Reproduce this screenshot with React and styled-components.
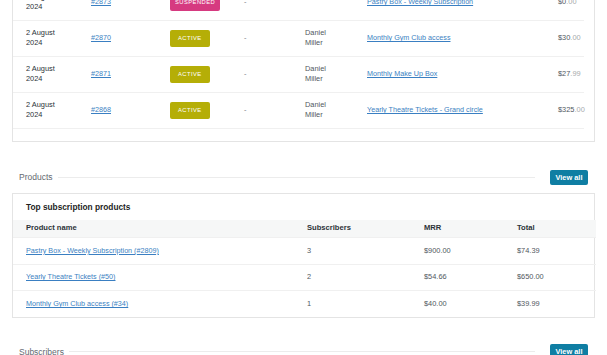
import React from "react";
import styled, { createGlobalStyle } from "styled-components";

const Global = createGlobalStyle`
  html, body {
    margin: 0;
    padding: 0;
    background: #fff;
    font-family: "Liberation Sans", Arial, sans-serif;
    color: #1e1e1e;
    overflow: hidden;
  }
`;

const Page = styled.div`
  width: 607px;
  margin-top: -16px;
  padding: 0 12px;
  box-sizing: border-box;
`;

const Card = styled.div`
  border: 1px solid #e4e4e4;
  background: #fff;
  padding-bottom: ${(p) => p.$pb || 0}px;
`;

const Table = styled.table`
  border-collapse: collapse;
  table-layout: fixed;
  width: ${(p) => p.$w || "100%"};
  font-size: 7.4px;
`;

const Row = styled.tr`
  height: ${(p) => p.$h}px;
  border-bottom: 1px solid #f0f0f0;
  background: ${(p) => (p.$head ? "#f6f7f7" : "transparent")};
  &:last-child {
    border-bottom: ${(p) => (p.$noLast ? "none" : "1px solid #f0f0f0")};
  }
`;

const Cell = styled.td`
  padding: 0 13px;
  vertical-align: middle;
  line-height: 10px;
  color: ${(p) => p.$color || "#2c3338"};
  font-weight: ${(p) => (p.$bold ? 700 : 400)};
  font-size: ${(p) => (p.$bold ? "7.6px" : "inherit")};
  white-space: ${(p) => (p.$nowrap ? "nowrap" : "normal")};
  text-align: left;
`;

const Link = styled.a`
  color: #3a7fc2;
  font-size: 7.2px;
  text-decoration: underline;
  white-space: nowrap;
`;

const Badge = styled.span`
  display: inline-block;
  padding: 0 ${(p) => (p.$wide ? 5 : 8)}px;
  height: 17px;
  line-height: 17px;
  border-radius: 2px;
  background: ${(p) => p.$bg};
  color: #fff;
  font-size: 5.8px;
  letter-spacing: 0.45px;
  text-transform: uppercase;
`;

const Dec = styled.span`
  color: #a7aaad;
`;

const Section = styled.div`
  display: flex;
  align-items: center;
  margin: ${(p) => p.$mt}px 0 8px;
  padding: 0 0 0 7px;
`;

const Label = styled.span`
  font-size: 8.5px;
  color: #646970;
`;

const Line = styled.div`
  flex: 1;
  height: 1px;
  background: #ececec;
  margin: 0 15px 0 5px;
`;

const Button = styled.button`
  width: 38px;
  height: 15px;
  margin-right: 7px;
  padding: 0;
  border: none;
  border-radius: 2px;
  background: #0f7ea3;
  color: #fff;
  font-family: inherit;
  font-weight: 700;
  font-size: 7.4px;
`;

const Title = styled.div`
  height: 26px;
  display: flex;
  align-items: center;
  padding-left: 13px;
  font-weight: 700;
  font-size: 8.3px;
  color: #1e1e1e;
`;

const Money = ({ v }) => {
  const [a, b] = v.split(".");
  return (
    <>
      {a}
      <Dec>.{b}</Dec>
    </>
  );
};

const orders = [
  { date: "2 August 2024", id: "#2873", status: "suspended", cust: "", prod: "Pastry Box - Weekly Subscription", total: "$0.00" },
  { date: "2 August 2024", id: "#2870", status: "active", cust: "Daniel Miller", prod: "Monthly Gym Club access", total: "$30.00" },
  { date: "2 August 2024", id: "#2871", status: "active", cust: "Daniel Miller", prod: "Monthly Make Up Box", total: "$27.99" },
  { date: "2 August 2024", id: "#2868", status: "active", cust: "Daniel Miller", prod: "Yearly Theatre Tickets - Grand circle", total: "$325.00" },
];

const products = [
  { name: "Pastry Box - Weekly Subscription (#2809)", subs: "3", mrr: "$900.00", total: "$74.39" },
  { name: "Yearly Theatre Tickets (#50)", subs: "2", mrr: "$54.66", total: "$650.00" },
  { name: "Monthly Gym Club access (#34)", subs: "1", mrr: "$40.00", total: "$39.99" },
];

const orderCols = [65, 79, 74, 61, 62, 191, 39];
const productCols = [281, 117, 93, 92];

export default function App() {
  return (
    <>
      <Global />
      <Page>
        <Card $pb={12}>
          <Table $w="571px">
            <colgroup>
              {orderCols.map((w, i) => (
                <col key={i} style={{ width: w }} />
              ))}
            </colgroup>
            <tbody>
              {orders.map((o, i) => (
                <Row key={o.id} $h={i === 0 ? 35 : 36}>
                  <Cell>{o.date}</Cell>
                  <Cell><Link href="#">{o.id}</Link></Cell>
                  <Cell $nowrap>
                    {o.status === "active" ? (
                      <Badge $bg="#b5ae07">Active</Badge>
                    ) : (
                      <Badge $bg="#d63a80" $wide>Suspended</Badge>
                    )}
                  </Cell>
                  <Cell $color="#787c82">-</Cell>
                  <Cell $color="#50575e">{o.cust}</Cell>
                  <Cell><Link href="#">{o.prod}</Link></Cell>
                  <Cell $color="#50575e" $nowrap><Money v={o.total} /></Cell>
                </Row>
              ))}
            </tbody>
          </Table>
        </Card>

        <Section $mt={28}>
          <Label>Products</Label>
          <Line />
          <Button>View all</Button>
        </Section>

        <Card>
          <Title>Top subscription products</Title>
          <Table>
            <colgroup>
              {productCols.map((w, i) => (
                <col key={i} style={{ width: w }} />
              ))}
            </colgroup>
            <tbody>
              <Row $h={18} $head>
                <Cell $bold>Product name</Cell>
                <Cell $bold>Subscribers</Cell>
                <Cell $bold>MRR</Cell>
                <Cell $bold>Total</Cell>
              </Row>
              {products.map((p) => (
                <Row key={p.name} $h={26.5} $noLast>
                  <Cell><Link href="#">{p.name}</Link></Cell>
                  <Cell $color="#50575e">{p.subs}</Cell>
                  <Cell $color="#50575e">{p.mrr}</Cell>
                  <Cell $color="#50575e">{p.total}</Cell>
                </Row>
              ))}
            </tbody>
          </Table>
        </Card>

        <Section $mt={26}>
          <Label>Subscribers</Label>
          <Line />
          <Button>View all</Button>
        </Section>
      </Page>
    </>
  );
}
